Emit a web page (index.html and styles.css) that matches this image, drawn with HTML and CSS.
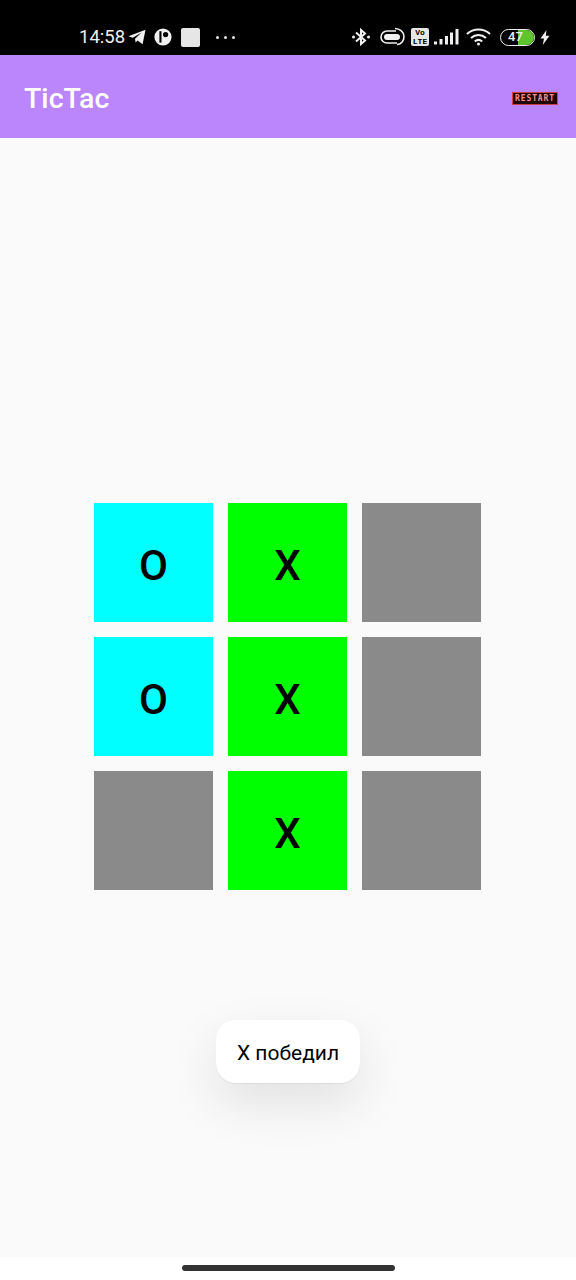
FILE: index.html
```html
<!DOCTYPE html>
<html>
<head>
<title>TicTac</title>
<link rel="stylesheet" href="styles.css">
</head>
<body>

<div id="screen">
    <div class="status-bar">
        <div class="status-left">
            <span class="clock">14:58</span>
            <svg class="ic-telegram" width="18" height="16" viewBox="0 0 18 16"><path d="M17.5 0.8 14.6 15.2 9.6 11.4 7.6 13.6 7 9.8 13.6 3.4 4.8 8.8 0.4 7.2Z" fill="#f0f0f0"/></svg>
            <svg class="ic-circle" width="18" height="18" viewBox="0 0 18 18"><circle cx="9" cy="9" r="8.6" fill="#f0f0f0"/><path d="M7.5 3.2H5.4V14.6H7.5Z" fill="#000"/><circle cx="11.6" cy="6.6" r="2.6" fill="#000"/></svg>
            <span class="square"></span>
            <span class="dots"><i></i><i></i><i></i></span>
        </div>
        <div class="status-right">
            <svg width="18" height="20" viewBox="1 0 18 20" fill="none" stroke="#f0f0f0" stroke-width="2"><path d="M5 5.500 14 13.500 10 17V3L14 6.500 5 14.500"/><circle cx="2.500" cy="10" r="1.500" fill="#f0f0f0" stroke="none"/><circle cx="17.500" cy="10" r="1.500" fill="#f0f0f0" stroke="none"/></svg>
            <svg class="ic-link" width="28" height="20" viewBox="0 0 28 20" fill="none" stroke="#f0f0f0" stroke-width="1.600"><path d="M18 4H9a6 6 0 0 0 0 12h10"/><path d="M17 1.500c5 0 9 3.500 9 8s-3 8-7 8"/><rect x="6" y="7" width="16" height="6" rx="3" fill="#f0f0f0" stroke="none"/></svg>
            <span class="volte">Vo<br>LTE</span>
            <svg class="ic-signal" width="25" height="16" viewBox="0 0 25 16" fill="#f0f0f0"><rect x="0" y="12.500" width="3" height="3"/><rect x="5.500" y="10" width="3" height="5.500"/><rect x="11" y="7" width="3" height="8.500"/><rect x="16" y="3.500" width="3" height="12"/><rect x="21.500" y="0" width="3" height="15.500"/></svg>
            <svg class="ic-wifi" width="25" height="18" viewBox="0 0 25 18" fill="none" stroke="#f0f0f0" stroke-width="2.200"><path d="M1 6C7.500 0 17.500 0 24 6"/><path d="M5 10c4.500-4 10.500-4 15 0"/><path d="M8.800 13.500c2.200-1.800 5.200-1.800 7.400 0"/><circle cx="12.500" cy="16" r="1.500" fill="#f0f0f0" stroke="none"/></svg>
            <span class="battery"><span class="battery-fill"></span><span class="battery-text">47</span></span>
            <svg class="ic-bolt" width="10" height="15" viewBox="0 0 10 15"><path d="M6.500 0 0.500 8.500H4L2.800 15 9.500 5.800H5.800Z" fill="#f0f0f0"/></svg>
        </div>
    </div>

    <div class="app-bar">
        <h1>TicTac</h1>
        <button class="restart">RESTART</button>
    </div>

    <div class="content">
        <div class="board">
            <div class="cell cell-o">O</div>
            <div class="cell cell-x">X</div>
            <div class="cell"></div>
            <div class="cell cell-o">O</div>
            <div class="cell cell-x">X</div>
            <div class="cell"></div>
            <div class="cell"></div>
            <div class="cell cell-x">X</div>
            <div class="cell"></div>
        </div>
        <div class="toast">X победил</div>
    </div>

    <div class="nav-bar"><span class="home-pill"></span></div>
</div>

</body>
</html>
```

FILE: styles.css
```css
/* Basic styling for the page */
html, body {
    margin: 0;
    padding: 0;
}

body {
    font-family: Roboto, sans-serif;
}

#screen {
    width: 576px;
    height: 1280px;
    display: flex;
    flex-direction: column;
    overflow: hidden;
}

/* status bar */
.status-bar {
    height: 55px;
    flex: none;
    background-color: #000;
    color: #f0f0f0;
    display: flex;
    justify-content: space-between;
    align-items: center;
    padding: 19px 26px 0 79px;
    box-sizing: border-box;
}

.status-left, .status-right {
    display: flex;
    align-items: center;
}

.clock {
    font-size: 18.500px;
    margin-right: 3px;
}

.ic-circle {
    margin-left: 8px;
}

.square {
    width: 19px;
    height: 19px;
    margin-left: 9px;
    border-radius: 2px;
    background-color: #e6e6e6;
}

.dots {
    display: flex;
    gap: 5px;
    margin-left: 16px;
}

.dots i {
    width: 3px;
    height: 3px;
    border-radius: 50%;
    background-color: #e6e6e6;
}

.ic-link {
    margin-left: 8px;
}

.volte {
    width: 18px;
    height: 18px;
    margin-left: 5px;
    border-radius: 2px;
    background-color: #e6e6e6;
    color: #000;
    font-family: "Liberation Mono", monospace;
    font-size: 8px;
    font-weight: bold;
    line-height: 9px;
    text-align: center;
}

.ic-signal {
    margin-left: 5px;
}

.ic-wifi {
    margin-left: 7px;
}

.battery {
    position: relative;
    width: 35px;
    height: 17px;
    margin-left: 9px;
    border: 1.500px solid #f0f0f0;
    border-radius: 9px;
    box-sizing: border-box;
    overflow: hidden;
}

.battery-fill {
    display: block;
    width: 50%;
    height: 100%;
    margin-left: 50%;
    background-color: #5fc52e;
    border-radius: 0 7px 7px 0;
}

.battery-text {
    position: absolute;
    top: 0;
    left: -2px;
    width: 100%;
    text-align: center;
    font-size: 13px;
    font-weight: 500;
    line-height: 14px;
    color: #f0f0f0;
}

.ic-bolt {
    margin-left: 5px;
}

/* app bar */
.app-bar {
    height: 83px;
    flex: none;
    background-color: #BB86FC;
    display: flex;
    justify-content: space-between;
    align-items: center;
    padding: 3px 18px 0 24px;
    box-sizing: border-box;
    box-shadow: 0 1px 4px rgba(0, 0, 0, 0.12);
    position: relative;
}

.app-bar h1 {
    margin: 0;
    font-size: 28.500px;
    font-weight: 500;
    color: white;
}

.restart {
    width: 46px;
    height: 13px;
    padding: 0;
    background-color: #200505;
    border: 1px solid #d04040;
    color: #f09090;
    font-family: "DejaVu Sans Mono", monospace;
    font-size: 8px;
    font-weight: bold;
    letter-spacing: 0.900px;
    line-height: 11px;
    text-align: center;
}

/* game board */
.content {
    flex: 1;
    position: relative;
    background-color: #fafafa;
    padding-top: 365px;
}

.board {
    display: grid;
    grid-template-columns: repeat(3, 119px);
    grid-auto-rows: 119px;
    gap: 15px;
    justify-content: center;
    margin-left: -1px;
}

.cell {
    background-color: #8a8a8a;
    display: flex;
    align-items: center;
    justify-content: center;
    padding-top: 5px;
    box-sizing: border-box;
    font-size: 42px;
    font-weight: 500;
    color: #000;
}

.cell-o {
    background-color: #00ffff;
}

.cell-x {
    background-color: #00ff00;
}

.toast {
    position: absolute;
    top: 882px;
    left: 216px;
    width: 144px;
    height: 63px;
    padding-top: 2px;
    box-sizing: border-box;
    border-radius: 20px;
    background-color: white;
    box-shadow: 0 1px 1px rgba(0, 0, 0, 0.06), 0 20px 50px rgba(0, 0, 0, 0.1);
    display: flex;
    align-items: center;
    justify-content: center;
    font-size: 21px;
    color: #000;
}

/* navigation bar */
.nav-bar {
    height: 23px;
    flex: none;
    background-color: white;
    display: flex;
    justify-content: center;
    padding-top: 8px;
    box-sizing: border-box;
}

.home-pill {
    width: 213px;
    height: 6px;
    border-radius: 3px;
    background-color: #333;
}
```
